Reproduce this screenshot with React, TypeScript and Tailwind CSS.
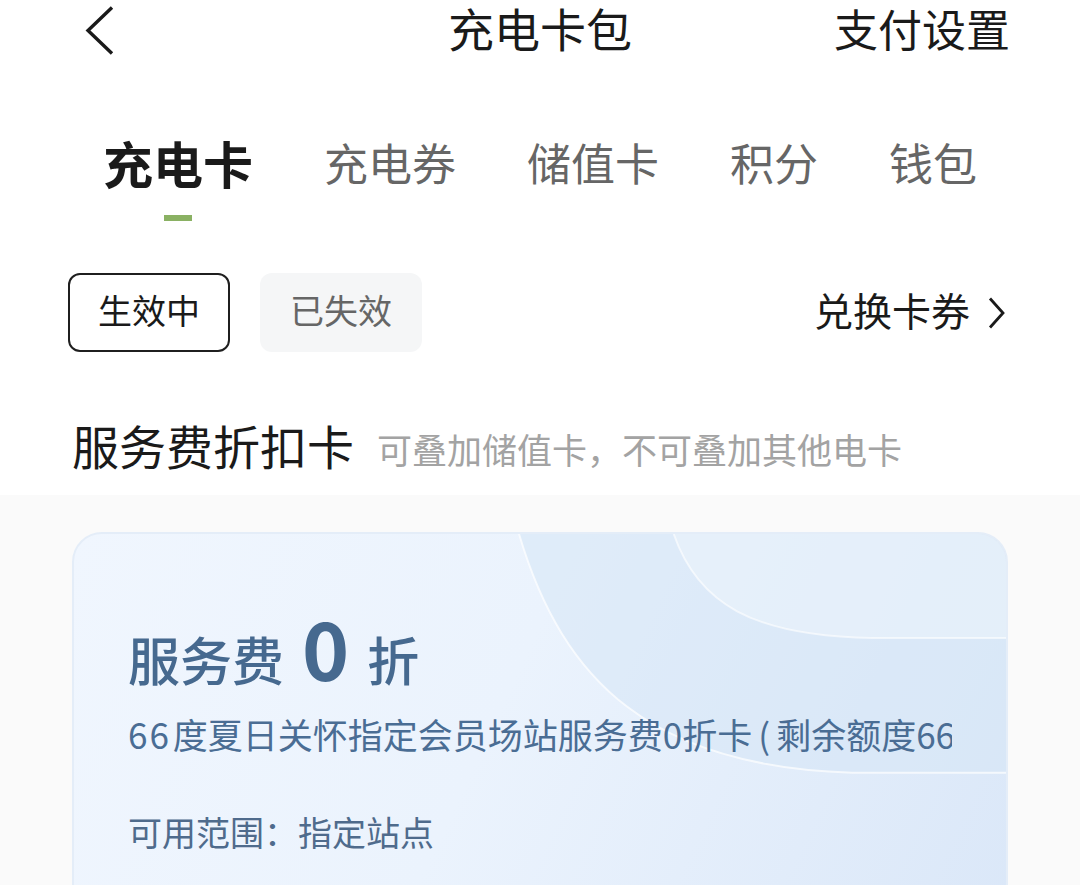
const font = { fontFamily: '"Noto Sans CJK SC", "Noto Sans", sans-serif' };

const tabs = ["充电卡", "充电券", "储值卡", "积分", "钱包"];

function CardArt() {
    return (
        <svg className="absolute inset-0 h-full w-full" viewBox="0 0 934 420" preserveAspectRatio="none">
            <path d="M446,0 C490,150 580,235 780,241 L934,241 L934,0 Z" fill="#d6e5f6" fillOpacity="0.55" />
            <path d="M601,0 C625,70 680,103 800,105 L934,105 L934,0 Z" fill="#edf4fc" fillOpacity="0.55" />
            <path d="M446,0 C490,150 580,235 780,241 L934,241" fill="none" stroke="#ffffff" strokeOpacity="0.7" strokeWidth="2" />
            <path d="M601,0 C625,70 680,103 800,105 L934,105" fill="none" stroke="#ffffff" strokeOpacity="0.6" strokeWidth="2" />
        </svg>
    );
}

export default function App() {
    return (
        <div className="w-[1080px] h-[885px] overflow-hidden bg-[#fafafa]" style={font}>
            <div className="bg-white pb-[27px]">
                <div className="relative flex h-[62px] items-center pl-[85px] pr-[70px] pb-[6px]">
                    <svg width="30" height="50" viewBox="0 0 30 50" className="mt-[6px]">
                        <polyline points="27,1.5 3,24.5 27,47.5" fill="none" stroke="#1a1a1a" strokeWidth="3.4" strokeLinejoin="miter" />
                    </svg>
                    <div className="absolute left-1/2 top-[4px] -translate-x-1/2 text-[46px] leading-none text-[#1a1a1a]">
                        充电卡包
                    </div>
                    <div className="ml-auto text-[44px] leading-none text-[#1a1a1a]">支付设置</div>
                </div>

                <div className="mt-[75px] flex gap-[71px] pl-[103px]">
                    {tabs.map((t, i) => (
                        <div key={t} className="flex h-[86px] flex-col items-center">
                            <div className="flex h-[50px] items-center">
                                {i === 0 ? (
                                    <span className="text-[50px] leading-none font-bold text-[#1a1a1a]">{t}</span>
                                ) : (
                                    <span className="text-[44px] leading-none text-[#666666]">{t}</span>
                                )}
                            </div>
                            {i === 0 && <div className="mt-[28px] h-[6px] w-[28px] shrink-0 bg-[#8ab163]" />}
                        </div>
                    ))}
                </div>

                <div className="mt-[50px] flex items-center pl-[68px] pr-[75px]">
                    <div className="flex h-[79px] w-[162px] items-center justify-center rounded-[12px] border-2 border-[#1f1f1f] pb-[6px] text-[34px] text-[#1a1a1a]">
                        生效中
                    </div>
                    <div className="ml-[30px] flex h-[79px] w-[162px] items-center justify-center rounded-[12px] bg-[#f5f6f7] pb-[6px] text-[34px] text-[#666666]">
                        已失效
                    </div>
                    <div className="ml-auto flex items-center gap-[18px] text-[39px] text-[#1a1a1a]">
                        <span className="pb-[6px]">兑换卡券</span>
                        <svg width="17" height="32" viewBox="0 0 17 32">
                            <polyline points="2,1.5 15,16 2,30.5" fill="none" stroke="#1a1a1a" strokeWidth="2.8" />
                        </svg>
                    </div>
                </div>

                <div className="mt-[69px] flex items-end pl-[72px]">
                    <span className="text-[47px] leading-none text-[#1a1a1a]">服务费折扣卡</span>
                    <span className="ml-[23px] mb-[2px] text-[35px] leading-none text-[#a3a3a3]">可叠加储值卡，不可叠加其他电卡</span>
                </div>
            </div>

            <div className="mx-[72px] mt-[37px] relative h-[420px] overflow-hidden rounded-[30px] border-2 border-[#e4edf8] bg-[linear-gradient(115deg,#f0f6fe_0%,#ebf3fd_45%,#dae7f8_100%)]">
                <CardArt />
                <div className="relative px-[54px] pt-[72px]">
                    <div className="flex items-baseline text-[#46698f]">
                        <span className="text-[52px] leading-none font-medium">服务费</span>
                        <span className="ml-[18px] text-[80px] leading-none font-bold">0</span>
                        <span className="ml-[18px] text-[52px] leading-none font-medium">折</span>
                    </div>
                    <div className="mt-[23px] w-[824px] overflow-hidden whitespace-nowrap text-[35px] leading-[49px] text-[#4a6d94]">
                        <span className="tracking-[2px] pr-[2px]">66</span>度夏日关怀指定会员场站服务费0折卡<span className="mx-[6px]">(</span>剩余额度66度)
                    </div>
                    <div className="mt-[57px] text-[34px] leading-none text-[#4f6b8c]">可用范围：指定站点</div>
                </div>
            </div>
        </div>
    );
}
